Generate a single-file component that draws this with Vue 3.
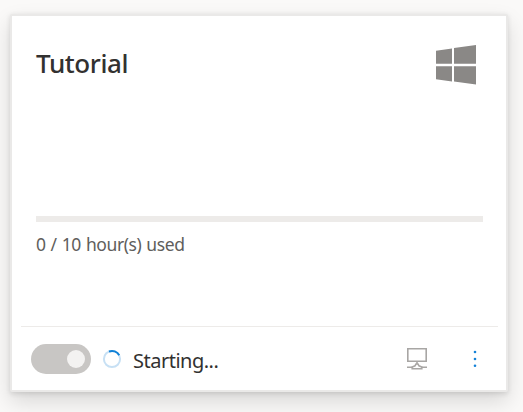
<script setup>
const title = 'Tutorial'
const used = 0
const total = 10
const status = 'Starting...'
</script>

<template>
  <main class="page">
    <article class="card">
      <header class="head">
        <h1 class="title">{{ title }}</h1>
        <svg class="os" width="40" height="40" viewBox="0 0 40 40" aria-hidden="true">
          <path d="M0 5.8 16 3.4V18.7H0ZM18 3.1 40 0V18.7H18ZM0 21.2H16V36.5L0 34.2ZM18 21.2H40V39.5L18 36.6Z" />
        </svg>
      </header>
      <section class="usage">
        <div class="track"><div class="fill" :style="{ width: (used / total) * 100 + '%' }"></div></div>
        <p class="hours">{{ used }} / {{ total }} hour(s) used</p>
      </section>
      <footer class="foot">
        <div class="toggle"><span class="knob"></span></div>
        <svg class="spinner" width="20" height="20" viewBox="0 0 20 20" aria-hidden="true">
          <circle cx="10" cy="10" r="8.1" fill="none" stroke="#c7e0f4" stroke-width="2" />
          <path d="M7 2.5A8.1 8.1 0 0 1 17.2 6.2" fill="none" stroke="#0f80d7" stroke-width="2" />
        </svg>
        <span class="status">{{ status }}</span>
        <svg class="monitor" width="22" height="24" viewBox="0 0 22 24" aria-hidden="true">
          <g fill="none" stroke="#a8a6a4" stroke-width="1.6">
            <path d="M1.8 1.8H20.2V14.3H1.8ZM11 14.5V17M1 20.3H6.2M15.8 20.3H21" />
            <path d="M6.2 21.8V20L9 18.8L10 17H12L13 18.8L15.8 20V21.8Z" />
          </g>
        </svg>
        <svg class="more" width="4" height="18" viewBox="0 0 4 18" aria-hidden="true">
          <circle cx="2" cy="2" r="1.3" />
          <circle cx="2" cy="9" r="1.3" />
          <circle cx="2" cy="15.8" r="1.3" />
        </svg>
      </footer>
    </article>
  </main>
</template>

<style>
body {
  margin: 0;
  background: #faf9f8;
}
</style>

<style scoped>
.page {
  box-sizing: border-box;
  width: 523px;
  height: 412px;
  padding: 14px 15px 20px 10px;
  overflow: hidden;
  font-family: "Noto Sans", "Open Sans", sans-serif;
}
.card {
  box-sizing: border-box;
  display: flex;
  flex-direction: column;
  height: 378px;
  border: 2px solid #eae9e8;
  border-radius: 2px;
  background: #fff;
  box-shadow: 0 9.6px 21.6px rgba(0, 0, 0, 0.132), 0 1.8px 5.4px rgba(0, 0, 0, 0.108);
}
.head {
  display: flex;
  justify-content: space-between;
  height: 200px;
  padding: 0 30px 0 24px;
}
.title {
  margin: 29px 0 0;
  font-size: 26px;
  font-weight: 500;
  line-height: 36px;
  letter-spacing: -0.4px;
  color: #323130;
}
.os {
  margin-top: 29px;
  fill: #8a8886;
}
.usage {
  flex: 1;
  padding: 0 23px 0 24px;
}
.track {
  height: 6px;
  background: #edebe9;
}
.fill {
  height: 6px;
  background: #0078d4;
}
.hours {
  margin: 10px 0 0;
  font-size: 17.5px;
  line-height: 24px;
  letter-spacing: -0.42px;
  word-spacing: 0.9px;
  color: #605e5c;
}
.foot {
  box-sizing: border-box;
  display: flex;
  align-items: center;
  height: 64px;
  margin: 0 8px 0 9px;
  padding: 0 21px 0 10px;
  border-top: 1px solid #edebe9;
}
.toggle {
  box-sizing: border-box;
  display: flex;
  align-items: center;
  justify-content: flex-end;
  width: 60px;
  height: 30px;
  padding-right: 6px;
  border-radius: 15px;
  background: #c8c6c4;
}
.knob {
  width: 18px;
  height: 18px;
  border-radius: 50%;
  background: #f3f2f1;
}
.spinner {
  margin-left: 11px;
}
.status {
  margin: 4px 0 0 11px;
  font-size: 20px;
  line-height: 28px;
  letter-spacing: -0.5px;
  color: #323130;
}
.monitor {
  margin-left: auto;
}
.more {
  margin-left: 45px;
  fill: #1482d8;
}
</style>
